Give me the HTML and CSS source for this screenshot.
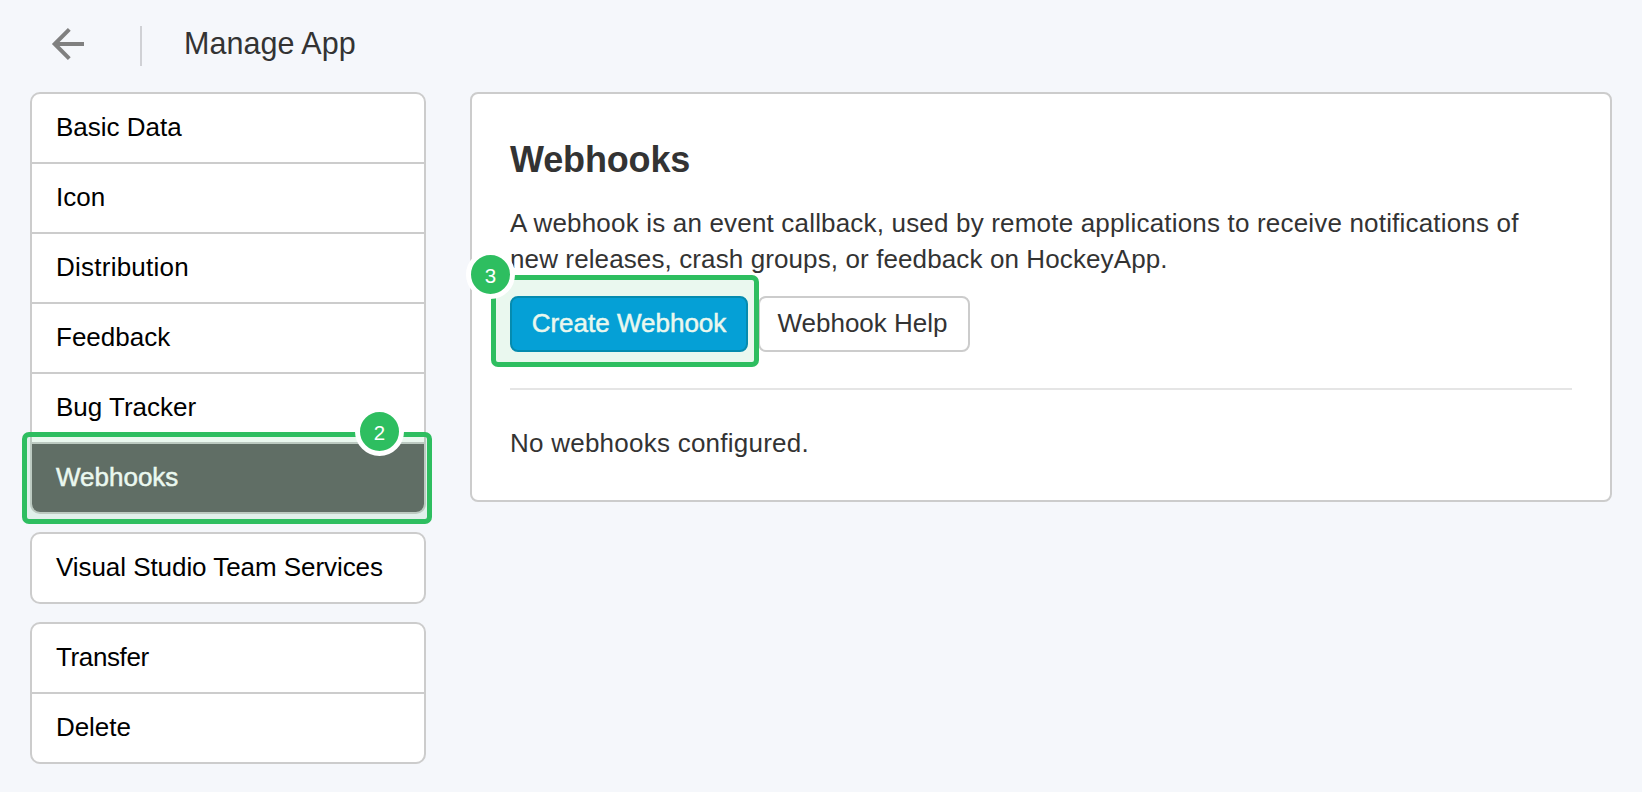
FILE: index.html
```html
<!DOCTYPE html>
<html lang="en">
<head>
<meta charset="utf-8">
<title>Manage App</title>
<link rel="stylesheet" href="styles.css">
</head>
<body>
<header class="topbar">
  <a class="back" aria-label="Back">
    <svg viewBox="0 0 48 48" width="48" height="48" fill="none" stroke="#808080" stroke-width="4"><path d="M40 24H11M25.3 9.4 10.7 24l14.6 14.6"/></svg>
  </a>
  <span class="divider"></span>
  <h1 class="title">Manage App</h1>
</header>
<main class="layout">
  <nav class="sidebar">
    <div class="group">
      <a class="item">Basic Data</a>
      <a class="item">Icon</a>
      <a class="item loose">Distribution</a>
      <a class="item">Feedback</a>
      <a class="item">Bug Tracker</a>
      <a class="item active">Webhooks</a>
      <div class="highlight highlight-nav"><span class="badge badge-nav">2</span></div>
    </div>
    <div class="group">
      <a class="item snug">Visual Studio Team Services</a>
    </div>
    <div class="group">
      <a class="item tight">Transfer</a>
      <a class="item snug">Delete</a>
    </div>
  </nav>
  <section class="panel">
    <h2 class="heading">Webhooks</h2>
    <p class="intro"><span class="intro-lead">A webhook is an event callback, used by remote applications to receive notifications of</span><br>new releases, crash groups, or feedback on HockeyApp.</p>
    <div class="actions">
      <a class="button primary">Create Webhook</a>
      <a class="button help">Webhook Help</a>
      <div class="highlight highlight-create"><span class="badge badge-create">3</span></div>
    </div>
    <hr class="rule">
    <p class="empty loose">No webhooks configured.</p>
  </section>
</main>
</body>
</html>
```
FILE: styles.css
```css
* { box-sizing: border-box; }

body {
  margin: 0;
  background: #f5f7fb;
  color: #333;
  font: 26px/36px "Liberation Sans", Arial, sans-serif;
}

h1, h2, p { margin: 0; }

.loose { letter-spacing: 0.24px; }
.snug { letter-spacing: -0.06px; }
.tight { letter-spacing: -0.38px; }

.topbar {
  display: flex;
  height: 92px;
  padding: 20px 0 0 44px;
}
.back { width: 48px; height: 48px; }
.back svg { display: block; }
.divider {
  width: 2px;
  height: 40px;
  margin: 6px 42px 0 48px;
  background: #d0d1d5;
}
.title {
  padding-top: 3px;
  font-size: 30.5px;
  line-height: 40px;
  font-weight: 400;
  letter-spacing: 0.05px;
}

.layout {
  display: flex;
  align-items: flex-start;
  gap: 44px;
  padding: 0 30px;
}

.sidebar {
  display: flex;
  flex-direction: column;
  gap: 18px;
  width: 396px;
}
.group {
  position: relative;
  border: 2px solid #ccc;
  border-radius: 10px;
  background: #fff;
}
.item {
  display: block;
  height: 68px;
  padding: 15px 24px 0;
  color: #000;
}
.item + .item {
  height: 70px;
  border-top: 2px solid #ccc;
}
.item.active {
  border-radius: 0 0 8px 8px;
  background: #666;
  background-clip: padding-box;
  color: #fff;
  -webkit-text-stroke: 0.5px #fff;
}

.panel {
  flex: 1;
  height: 410px;
  padding: 46px 38px 0;
  border: 2px solid #ccc;
  border-radius: 8px;
  background: #fff;
}
.heading {
  font-size: 36px;
  line-height: 40px;
  letter-spacing: -0.15px;
}
.intro {
  margin-top: 25px;
  letter-spacing: 0.11px;
  white-space: nowrap;
}
.intro-lead { letter-spacing: 0.18px; }
.actions {
  position: relative;
  display: flex;
  gap: 10px;
  margin-top: 19px;
}
.button {
  height: 56px;
  border: 2px solid #ccc;
  border-radius: 8px;
  text-align: center;
  line-height: 50px;
}
.primary {
  width: 238px;
  border-color: #0086b8;
  background: #009ee4;
  color: #fff;
  -webkit-text-stroke: 0.5px #fff;
}
.help { width: 212px; padding-right: 3px; }
.rule {
  height: 2px;
  margin: 36px 0 35px;
  border: 0;
  background: #e5e5e5;
}

.highlight {
  position: absolute;
  border: 5px solid #2ebe60;
  border-radius: 7px;
  background: rgba(46, 190, 96, 0.1);
}
.highlight-nav {
  left: -10px;
  bottom: -12px;
  width: 410px;
  height: 92px;
}
.highlight-create {
  left: -19px;
  top: -21px;
  width: 268px;
  height: 92px;
}
.badge {
  position: absolute;
  width: 49px;
  height: 49px;
  border: 5px solid #fff;
  border-radius: 50%;
  background: #2ebe60;
  color: #fff;
  font: 20.5px/41px "Liberation Sans", Arial, sans-serif;
  text-align: center;
}
.badge-nav { left: 328px; top: -30px; }
.badge-create { left: -30px; top: -30px; }
```
